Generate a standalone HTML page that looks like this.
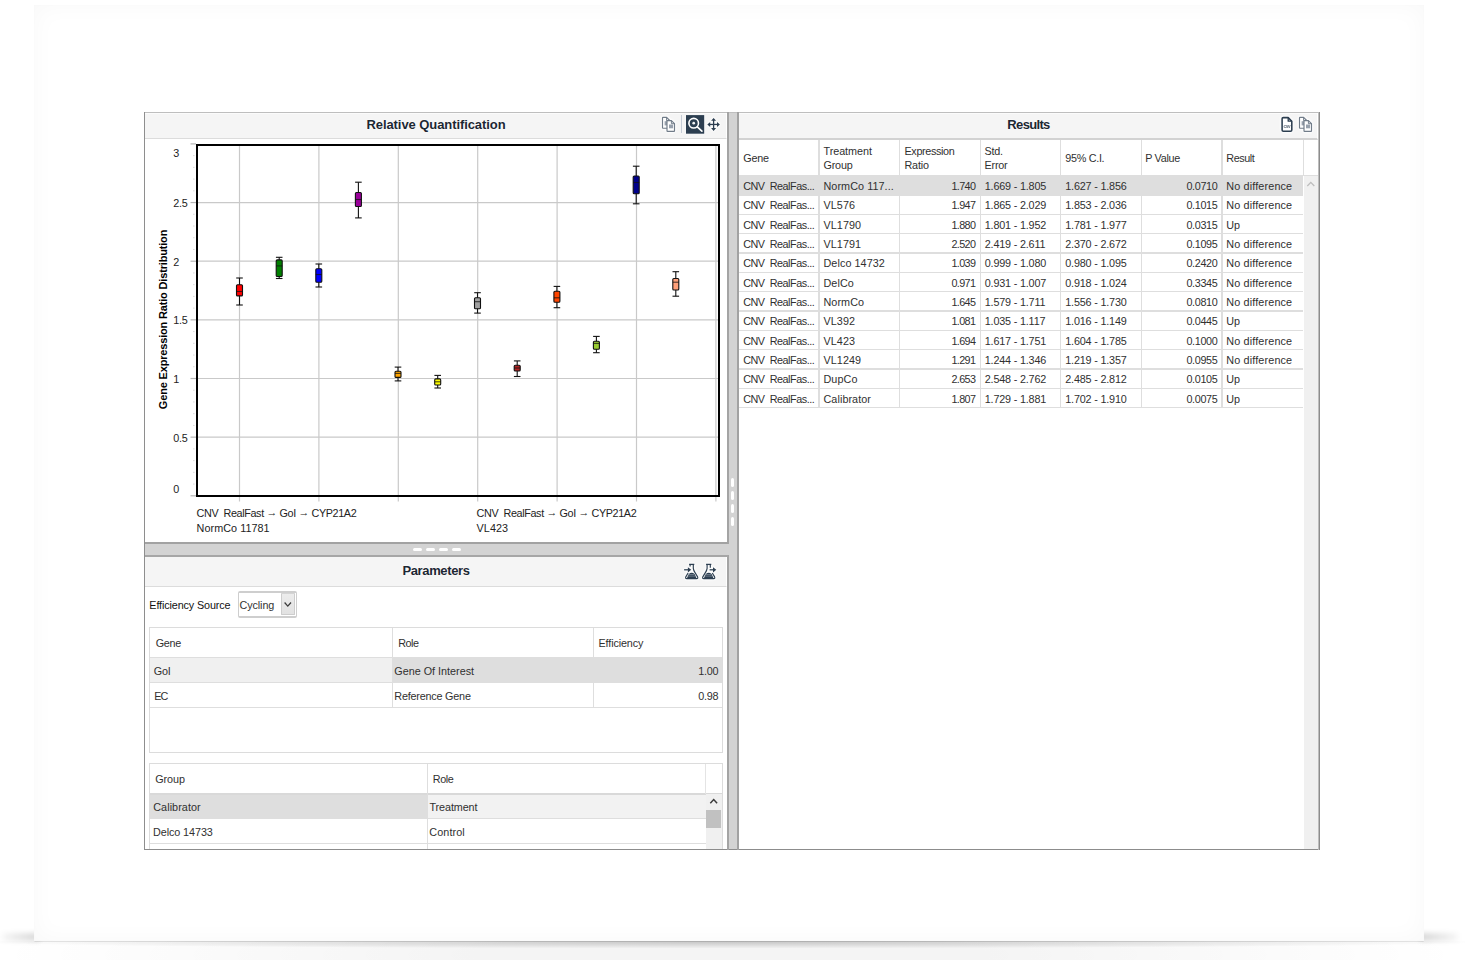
<!DOCTYPE html><html lang="en"><head><meta charset="utf-8"><title>Relative Quantification</title><style>
*{box-sizing:border-box;margin:0;padding:0}
html,body{width:1465px;height:960px;overflow:hidden;background:#fff}
body{position:relative;font-family:"Liberation Sans",sans-serif;font-size:10.8px;color:#303030}
.abs{position:absolute}
.t{position:absolute;white-space:pre;line-height:14px;height:14px}
.card{position:absolute;left:34.4px;top:5.2px;width:1390px;height:935.7px;background:#fff;
  box-shadow:inset 0 0 24px rgba(0,0,0,.03), inset 0 0 1px rgba(0,0,0,.06), 0 0 0 rgba(0,0,0,0);}
.shadowL,.shadowR{position:absolute;top:932.5px;height:8px;width:38px;filter:blur(2.6px);}
.shadowL{background:linear-gradient(to left,rgba(0,0,0,.16),rgba(0,0,0,.03))}
.shadowR{background:linear-gradient(to right,rgba(0,0,0,.16),rgba(0,0,0,.03))}
.shadowB{position:absolute;left:0;top:940.6px;width:1465px;height:20px;background:
 linear-gradient(to right,rgba(0,0,0,0) 34px,rgba(0,0,0,.09) 35px,rgba(0,0,0,.12) 300px,rgba(0,0,0,.14) 730px,rgba(0,0,0,.12) 1160px,rgba(0,0,0,.09) 1423px,rgba(0,0,0,0) 1424.5px) 0 0/100% 1.3px no-repeat,
 radial-gradient(ellipse 760px 6.5px at 730px 1px,rgba(0,0,0,.18),rgba(0,0,0,.10) 45%,rgba(0,0,0,.03) 85%,rgba(0,0,0,0) 100%),
 radial-gradient(ellipse 735px 75px at 730px 14px,rgba(0,0,0,.045) 0,rgba(0,0,0,.042) 35%,rgba(0,0,0,.02) 70%,rgba(0,0,0,0) 100%)}
.hdr{position:absolute;background:#f5f5f5;border-bottom:1px solid #dcdcdc}
.ttl{position:absolute;text-shadow:0 0 2px #fff,0 0 1px #fff;font-weight:bold;font-size:13px;color:#1c2733;text-align:center;line-height:16px;white-space:pre}
.ln{position:absolute;background:#dedede}
</style></head><body>
<div class="shadowL" style="left:2px"></div><div class="shadowR" style="left:1420px"></div><div class="shadowB"></div>
<div class="card"></div>
<div class="abs" style="left:144px;top:112px;width:1176px;height:738px;background:#d3d3d3;"></div>
<div class="abs" style="left:145px;top:113px;width:583px;height:430px;background:#fff;"></div>
<div class="abs" style="left:145px;top:557px;width:583px;height:292px;background:#fff;"></div>
<div class="abs" style="left:739px;top:113px;width:579px;height:736px;background:#fff;"></div>
<div class="hdr" style="left:145px;top:113px;width:582px;height:26px;box-shadow:inset 0 1px 0 #fbfbfb;border-right:1px solid #fff"></div>
<div class="ttl" style="left:145px;top:116.9px;width:582px;letter-spacing:-0.08px">Relative Quantification</div>
<div class="hdr" style="left:145px;top:557px;width:582px;height:30px;border-right:1px solid #fff"></div>
<div class="ttl" style="left:145px;top:562.7px;width:582px;letter-spacing:-0.36px">Parameters</div>
<div class="hdr" style="left:739px;top:113px;width:579px;height:27px;border-bottom:2px solid #d2d2d2;box-shadow:inset 0 1px 0 #fbfbfb;border-right:1px solid #fff"></div>
<div class="ttl" style="left:739px;top:116.6px;width:579px;letter-spacing:-0.66px">Results</div>
<div class="abs" style="left:144px;top:112px;width:1176px;height:1px;background:#bebebe;"></div>
<div class="abs" style="left:144px;top:112px;width:1px;height:738px;background:#8e8e8e;"></div>
<div class="abs" style="left:144px;top:849px;width:1176px;height:1px;background:#8c8c8c;"></div>
<div class="abs" style="left:1318px;top:112px;width:1px;height:738px;background:#bdbdbd;"></div>
<div class="abs" style="left:1319px;top:112px;width:1px;height:738px;background:#8c8c8c;"></div>
<div class="abs" style="left:727.4px;top:112px;width:1.6px;height:432.1px;background:#a4a4a4;"></div>
<div class="abs" style="left:727.4px;top:555.3px;width:1.6px;height:294.7px;background:#a4a4a4;"></div>
<div class="abs" style="left:736.9px;top:112px;width:2.1px;height:738px;background:#a2a2a2;"></div>
<div class="abs" style="left:145px;top:542.4px;width:583px;height:1.7px;background:#a2a2a2;"></div>
<div class="abs" style="left:145px;top:555.3px;width:583px;height:1.7px;background:#a6a6a6;"></div>
<div class="abs" style="left:412.9px;top:548px;width:9.5px;height:3.4px;background:#fff;border-radius:2px"></div>
<div class="abs" style="left:425.79999999999995px;top:548px;width:9.5px;height:3.4px;background:#fff;border-radius:2px"></div>
<div class="abs" style="left:438.7px;top:548px;width:9.5px;height:3.4px;background:#fff;border-radius:2px"></div>
<div class="abs" style="left:451.59999999999997px;top:548px;width:9.5px;height:3.4px;background:#fff;border-radius:2px"></div>
<div class="abs" style="left:731.2px;top:478.3px;width:3.2px;height:9px;background:#fff;border-radius:2px"></div>
<div class="abs" style="left:731.2px;top:491.3px;width:3.2px;height:9px;background:#fff;border-radius:2px"></div>
<div class="abs" style="left:731.2px;top:504.3px;width:3.2px;height:9px;background:#fff;border-radius:2px"></div>
<div class="abs" style="left:731.2px;top:517.3px;width:3.2px;height:9px;background:#fff;border-radius:2px"></div>
<svg class="abs" style="left:146px;top:139px" width="582" height="404" viewBox="146 139 582 404" font-family="Liberation Sans, sans-serif" font-size="10.8">
<line x1="198" x2="718" y1="437.15" y2="437.15" stroke="#c9c9c9" stroke-width="1.2"/>
<line x1="198" x2="718" y1="378.50" y2="378.50" stroke="#c9c9c9" stroke-width="1.2"/>
<line x1="198" x2="718" y1="319.85" y2="319.85" stroke="#c9c9c9" stroke-width="1.2"/>
<line x1="198" x2="718" y1="261.20" y2="261.20" stroke="#c9c9c9" stroke-width="1.2"/>
<line x1="198" x2="718" y1="202.55" y2="202.55" stroke="#c9c9c9" stroke-width="1.2"/>
<line x1="239.50" x2="239.50" y1="146" y2="501.5" stroke="#c9c9c9" stroke-width="1.2"/>
<line x1="318.90" x2="318.90" y1="146" y2="501.5" stroke="#c9c9c9" stroke-width="1.2"/>
<line x1="398.30" x2="398.30" y1="146" y2="501.5" stroke="#c9c9c9" stroke-width="1.2"/>
<line x1="477.70" x2="477.70" y1="146" y2="501.5" stroke="#c9c9c9" stroke-width="1.2"/>
<line x1="557.10" x2="557.10" y1="146" y2="501.5" stroke="#c9c9c9" stroke-width="1.2"/>
<line x1="636.50" x2="636.50" y1="146" y2="501.5" stroke="#c9c9c9" stroke-width="1.2"/>
<line x1="715.90" x2="715.90" y1="146" y2="501.5" stroke="#c9c9c9" stroke-width="1.2"/>
<line x1="190.5" x2="196" y1="495.80" y2="495.80" stroke="#b5b5b5" stroke-width="1.2"/>
<line x1="193" x2="194.6" y1="484.07" y2="484.07" stroke="#dcdcdc" stroke-width="1"/>
<line x1="193" x2="194.6" y1="472.34" y2="472.34" stroke="#dcdcdc" stroke-width="1"/>
<line x1="193" x2="194.6" y1="460.61" y2="460.61" stroke="#dcdcdc" stroke-width="1"/>
<line x1="193" x2="194.6" y1="448.88" y2="448.88" stroke="#dcdcdc" stroke-width="1"/>
<line x1="190.5" x2="196" y1="437.15" y2="437.15" stroke="#b5b5b5" stroke-width="1.2"/>
<line x1="193" x2="194.6" y1="425.42" y2="425.42" stroke="#dcdcdc" stroke-width="1"/>
<line x1="193" x2="194.6" y1="413.69" y2="413.69" stroke="#dcdcdc" stroke-width="1"/>
<line x1="193" x2="194.6" y1="401.96" y2="401.96" stroke="#dcdcdc" stroke-width="1"/>
<line x1="193" x2="194.6" y1="390.23" y2="390.23" stroke="#dcdcdc" stroke-width="1"/>
<line x1="190.5" x2="196" y1="378.50" y2="378.50" stroke="#b5b5b5" stroke-width="1.2"/>
<line x1="193" x2="194.6" y1="366.77" y2="366.77" stroke="#dcdcdc" stroke-width="1"/>
<line x1="193" x2="194.6" y1="355.04" y2="355.04" stroke="#dcdcdc" stroke-width="1"/>
<line x1="193" x2="194.6" y1="343.31" y2="343.31" stroke="#dcdcdc" stroke-width="1"/>
<line x1="193" x2="194.6" y1="331.58" y2="331.58" stroke="#dcdcdc" stroke-width="1"/>
<line x1="190.5" x2="196" y1="319.85" y2="319.85" stroke="#b5b5b5" stroke-width="1.2"/>
<line x1="193" x2="194.6" y1="308.12" y2="308.12" stroke="#dcdcdc" stroke-width="1"/>
<line x1="193" x2="194.6" y1="296.39" y2="296.39" stroke="#dcdcdc" stroke-width="1"/>
<line x1="193" x2="194.6" y1="284.66" y2="284.66" stroke="#dcdcdc" stroke-width="1"/>
<line x1="193" x2="194.6" y1="272.93" y2="272.93" stroke="#dcdcdc" stroke-width="1"/>
<line x1="190.5" x2="196" y1="261.20" y2="261.20" stroke="#b5b5b5" stroke-width="1.2"/>
<line x1="193" x2="194.6" y1="249.47" y2="249.47" stroke="#dcdcdc" stroke-width="1"/>
<line x1="193" x2="194.6" y1="237.74" y2="237.74" stroke="#dcdcdc" stroke-width="1"/>
<line x1="193" x2="194.6" y1="226.01" y2="226.01" stroke="#dcdcdc" stroke-width="1"/>
<line x1="193" x2="194.6" y1="214.28" y2="214.28" stroke="#dcdcdc" stroke-width="1"/>
<line x1="190.5" x2="196" y1="202.55" y2="202.55" stroke="#b5b5b5" stroke-width="1.2"/>
<line x1="193" x2="194.6" y1="190.82" y2="190.82" stroke="#dcdcdc" stroke-width="1"/>
<line x1="193" x2="194.6" y1="179.09" y2="179.09" stroke="#dcdcdc" stroke-width="1"/>
<line x1="193" x2="194.6" y1="167.36" y2="167.36" stroke="#dcdcdc" stroke-width="1"/>
<line x1="193" x2="194.6" y1="155.63" y2="155.63" stroke="#dcdcdc" stroke-width="1"/>
<line x1="190.5" x2="196" y1="143.90" y2="143.90" stroke="#b5b5b5" stroke-width="1.2"/>
<rect x="197" y="145" width="522" height="351" fill="none" stroke="#000" stroke-width="2"/>
<text x="173.2" y="157.3" fill="#222" letter-spacing="-0.2">3</text>
<text x="173.2" y="206.6" fill="#222" letter-spacing="-0.2">2.5</text>
<text x="173.2" y="265.5" fill="#222" letter-spacing="-0.2">2</text>
<text x="173.2" y="324.3" fill="#222" letter-spacing="-0.2">1.5</text>
<text x="173.2" y="382.8" fill="#222" letter-spacing="-0.2">1</text>
<text x="173.2" y="441.5" fill="#222" letter-spacing="-0.2">0.5</text>
<text x="173.2" y="493.2" fill="#222" letter-spacing="-0.2">0</text>
<text transform="translate(167,319.5) rotate(-90)" text-anchor="middle" font-weight="bold" font-size="11" fill="#000" letter-spacing="-0.17">Gene Expression Ratio Distribution</text>
<text x="196.6" y="517" fill="#222" letter-spacing="-0.37" xml:space="preserve">CNV  RealFast <tspan dy="-1.5" font-weight="bold">→</tspan><tspan dy="1.5"> GoI </tspan><tspan dy="-1.5" font-weight="bold">→</tspan><tspan dy="1.5"> CYP21A2</tspan></text>
<text x="196.6" y="531.7" fill="#222" letter-spacing="0.05">NormCo 11781</text>
<text x="476.6" y="517" fill="#222" letter-spacing="-0.37" xml:space="preserve">CNV  RealFast <tspan dy="-1.5" font-weight="bold">→</tspan><tspan dy="1.5"> GoI </tspan><tspan dy="-1.5" font-weight="bold">→</tspan><tspan dy="1.5"> CYP21A2</tspan></text>
<text x="476.6" y="531.7" fill="#222" letter-spacing="0.05">VL423</text>
<g stroke="#111" stroke-width="1.1"><line x1="239.5" x2="239.5" y1="278.0" y2="305.0"/><line x1="236.2" x2="242.8" y1="278.0" y2="278.0"/><line x1="236.2" x2="242.8" y1="305.0" y2="305.0"/><rect x="236.5" y="284.7" width="6" height="11.2" rx="1" fill="#ff0000"/><line x1="236.5" x2="242.5" y1="291.5" y2="291.5" stroke-opacity=".75"/></g>
<g stroke="#111" stroke-width="1.1"><line x1="279.2" x2="279.2" y1="257.3" y2="278.5"/><line x1="275.9" x2="282.5" y1="257.3" y2="257.3"/><line x1="275.9" x2="282.5" y1="278.5" y2="278.5"/><rect x="276.2" y="259.9" width="6" height="16.6" rx="1" fill="#008000"/><line x1="276.2" x2="282.2" y1="265.9" y2="265.9" stroke-opacity=".75"/></g>
<g stroke="#111" stroke-width="1.1"><line x1="318.8" x2="318.8" y1="264.0" y2="287.0"/><line x1="315.5" x2="322.1" y1="264.0" y2="264.0"/><line x1="315.5" x2="322.1" y1="287.0" y2="287.0"/><rect x="315.8" y="268.7" width="6" height="13.6" rx="1" fill="#0000ff"/><line x1="315.8" x2="321.8" y1="274.5" y2="274.5" stroke-opacity=".75"/></g>
<g stroke="#111" stroke-width="1.1"><line x1="358.4" x2="358.4" y1="182.2" y2="217.9"/><line x1="355.09999999999997" x2="361.7" y1="182.2" y2="182.2"/><line x1="355.09999999999997" x2="361.7" y1="217.9" y2="217.9"/><rect x="355.4" y="192.5" width="6" height="14.0" rx="1" fill="#990099"/><line x1="355.4" x2="361.4" y1="199.5" y2="199.5" stroke-opacity=".75"/></g>
<g stroke="#111" stroke-width="1.1"><line x1="398.0" x2="398.0" y1="367.1" y2="380.9"/><line x1="394.7" x2="401.3" y1="367.1" y2="367.1"/><line x1="394.7" x2="401.3" y1="380.9" y2="380.9"/><rect x="395.0" y="371.2" width="6" height="6.2" rx="1" fill="#ffa500"/><line x1="395.0" x2="401.0" y1="373.4" y2="373.4" stroke-opacity=".75"/></g>
<g stroke="#111" stroke-width="1.1"><line x1="437.7" x2="437.7" y1="375.4" y2="388.0"/><line x1="434.4" x2="441.0" y1="375.4" y2="375.4"/><line x1="434.4" x2="441.0" y1="388.0" y2="388.0"/><rect x="434.7" y="378.9" width="6" height="6.1" rx="1" fill="#ffff00"/><line x1="434.7" x2="440.7" y1="381.8" y2="381.8" stroke-opacity=".75"/></g>
<g stroke="#111" stroke-width="1.1"><line x1="477.5" x2="477.5" y1="292.7" y2="313.1"/><line x1="474.2" x2="480.8" y1="292.7" y2="292.7"/><line x1="474.2" x2="480.8" y1="313.1" y2="313.1"/><rect x="474.5" y="297.8" width="6" height="11.0" rx="1" fill="#a0a0a0"/><line x1="474.5" x2="480.5" y1="301.7" y2="301.7" stroke-opacity=".75"/></g>
<g stroke="#111" stroke-width="1.1"><line x1="517.2" x2="517.2" y1="360.9" y2="376.5"/><line x1="513.9000000000001" x2="520.5" y1="360.9" y2="360.9"/><line x1="513.9000000000001" x2="520.5" y1="376.5" y2="376.5"/><rect x="514.2" y="365.2" width="6" height="5.8" rx="1" fill="#b22222"/><line x1="514.2" x2="520.2" y1="368.0" y2="368.0" stroke-opacity=".75"/></g>
<g stroke="#111" stroke-width="1.1"><line x1="556.9" x2="556.9" y1="286.4" y2="307.7"/><line x1="553.6" x2="560.1999999999999" y1="286.4" y2="286.4"/><line x1="553.6" x2="560.1999999999999" y1="307.7" y2="307.7"/><rect x="553.9" y="291.2" width="6" height="11.1" rx="1" fill="#ff4500"/><line x1="553.9" x2="559.9" y1="297.8" y2="297.8" stroke-opacity=".75"/></g>
<g stroke="#111" stroke-width="1.1"><line x1="596.4" x2="596.4" y1="336.4" y2="352.7"/><line x1="593.1" x2="599.6999999999999" y1="336.4" y2="336.4"/><line x1="593.1" x2="599.6999999999999" y1="352.7" y2="352.7"/><rect x="593.4" y="341.3" width="6" height="7.9" rx="1" fill="#9acd32"/><line x1="593.4" x2="599.4" y1="343.4" y2="343.4" stroke-opacity=".75"/></g>
<g stroke="#111" stroke-width="1.1"><line x1="636.2" x2="636.2" y1="166.2" y2="203.8"/><line x1="632.9000000000001" x2="639.5" y1="166.2" y2="166.2"/><line x1="632.9000000000001" x2="639.5" y1="203.8" y2="203.8"/><rect x="633.2" y="176.0" width="6" height="17.7" rx="1" fill="#00008b"/><line x1="633.2" x2="639.2" y1="182.5" y2="182.5" stroke-opacity=".75"/></g>
<g stroke="#111" stroke-width="1.1"><line x1="675.8" x2="675.8" y1="271.7" y2="296.2"/><line x1="672.5" x2="679.0999999999999" y1="271.7" y2="271.7"/><line x1="672.5" x2="679.0999999999999" y1="296.2" y2="296.2"/><rect x="672.8" y="278.5" width="6" height="11.5" rx="1" fill="#ffa07a"/><line x1="672.8" x2="678.8" y1="282.2" y2="282.2" stroke-opacity=".75"/></g>
</svg>
<div class="t" style="left:149.3px;top:598.2px;letter-spacing:-0.12px;color:#111">Efficiency Source</div>
<div class="abs" style="left:237.6px;top:590.9px;width:59.2px;height:26.7px;background:#fff;border:1.5px solid #cecece;border-top-width:2.1px;border-bottom-width:2.1px;border-radius:2px"></div>
<div class="abs" style="left:281px;top:593px;width:14px;height:22.2px;background:linear-gradient(#ececec,#e2e2e2);border:1px solid #cdcdcd;border-top-color:#d4d4d4;border-radius:1px"></div>
<svg class="abs" style="left:283px;top:600px" width="10" height="9" viewBox="283 600 10 9"><path d="M284.6 602.5 L287.8 606.1 L291 602.5" fill="none" stroke="#3a3a3a" stroke-width="1.25"/></svg>
<div class="t" style="left:239.5px;top:598.2px;letter-spacing:-0.1px;color:#333">Cycling</div>
<div class="abs" style="left:149px;top:627px;width:574px;height:126px;background:#fff;border:1px solid #dcdcdc"></div>
<div class="abs" style="left:150px;top:658px;width:242px;height:24px;background:#f0f0f0;"></div>
<div class="abs" style="left:392px;top:658px;width:330px;height:24px;background:#dedede;"></div>
<div class="ln" style="left:150px;top:657px;width:572px;height:1px"></div>
<div class="ln" style="left:150px;top:682px;width:572px;height:1px"></div>
<div class="ln" style="left:150px;top:707px;width:572px;height:1px"></div>
<div class="ln" style="left:392px;top:628px;width:1px;height:80px"></div>
<div class="ln" style="left:592.5px;top:628px;width:1px;height:80px"></div>
<div class="t" style="left:155.8px;top:635.8px;letter-spacing:-0.35px">Gene</div>
<div class="t" style="left:398.2px;top:635.8px;letter-spacing:-0.5px">Role</div>
<div class="t" style="left:598.5px;top:635.8px;letter-spacing:-0.12px">Efficiency</div>
<div class="t" style="left:153.8px;top:663.7px;letter-spacing:-0.2px">GoI</div>
<div class="t" style="left:394.3px;top:663.7px;letter-spacing:0px">Gene Of Interest</div>
<div class="t" style="right:746.9px;text-align:right;top:663.7px;letter-spacing:-0.3px">1.00</div>
<div class="t" style="left:154.2px;top:688.7px;letter-spacing:-0.9px">EC</div>
<div class="t" style="left:394.3px;top:688.7px;letter-spacing:-0.2px">Reference Gene</div>
<div class="t" style="right:746.9px;text-align:right;top:688.7px;letter-spacing:-0.3px">0.98</div>
<div class="abs" style="left:149px;top:763px;width:573.5px;height:86px;background:#fff;border:1px solid #dcdcdc;border-bottom:none"></div>
<div class="abs" style="left:150px;top:794px;width:277px;height:24.5px;background:#dedede;"></div>
<div class="abs" style="left:427px;top:794px;width:279px;height:24.5px;background:#f2f2f2;"></div>
<div class="ln" style="left:150px;top:793px;width:556px;height:1px"></div>
<div class="ln" style="left:150px;top:818px;width:556px;height:1px"></div>
<div class="ln" style="left:150px;top:843px;width:556px;height:1px"></div>
<div class="ln" style="left:150px;top:793px;width:572px;height:1.8px;background:#d9d9d9"></div>
<div class="ln" style="left:426.5px;top:764px;width:1px;height:85px"></div>
<div class="ln" style="left:705px;top:764px;width:1px;height:30px;background:#e4e4e4"></div>
<div class="abs" style="left:706px;top:794px;width:15.5px;height:55px;background:#f0f0f0;"></div>
<div class="abs" style="left:706.3px;top:810.3px;width:15px;height:17.6px;background:#c1c1c1;"></div>
<svg class="abs" style="left:709px;top:797px" width="10" height="8" viewBox="0 0 10 8"><path d="M1.3 6.2 L4.7 2.6 L8.1 6.2" fill="none" stroke="#3c3c3c" stroke-width="1.5"/></svg>
<div class="t" style="left:155.3px;top:772.2px;letter-spacing:-0.1px">Group</div>
<div class="t" style="left:432.8px;top:772.0px;letter-spacing:-0.45px">Role</div>
<div class="t" style="left:153.2px;top:799.7px;letter-spacing:0.08px">Calibrator</div>
<div class="t" style="left:429.5px;top:799.7px;letter-spacing:-0.1px">Treatment</div>
<div class="t" style="left:153.0px;top:824.5px;letter-spacing:-0.08px">Delco 14733</div>
<div class="t" style="left:429.3px;top:824.5px;letter-spacing:0.1px">Control</div>
<div class="abs" style="left:739px;top:176px;width:564px;height:19.3px;background:#dedede;"></div>
<div class="abs" style="left:1303.5px;top:176px;width:14.5px;height:673px;background:#f0f0f0;"></div>
<svg class="abs" style="left:1306px;top:180px" width="10" height="8" viewBox="0 0 10 8"><path d="M1.3 6 L4.8 2.4 L8.3 6" fill="none" stroke="#bdbdbd" stroke-width="1.3"/></svg>
<div class="ln" style="left:739px;top:175.20px;width:564px;height:1.2px"></div>
<div class="ln" style="left:739px;top:194.52px;width:564px;height:1.2px"></div>
<div class="ln" style="left:739px;top:213.84px;width:564px;height:1.2px"></div>
<div class="ln" style="left:739px;top:233.16px;width:564px;height:1.2px"></div>
<div class="ln" style="left:739px;top:252.48px;width:564px;height:1.2px"></div>
<div class="ln" style="left:739px;top:271.80px;width:564px;height:1.2px"></div>
<div class="ln" style="left:739px;top:291.12px;width:564px;height:1.2px"></div>
<div class="ln" style="left:739px;top:310.44px;width:564px;height:1.2px"></div>
<div class="ln" style="left:739px;top:329.76px;width:564px;height:1.2px"></div>
<div class="ln" style="left:739px;top:349.08px;width:564px;height:1.2px"></div>
<div class="ln" style="left:739px;top:368.40px;width:564px;height:1.2px"></div>
<div class="ln" style="left:739px;top:387.72px;width:564px;height:1.2px"></div>
<div class="ln" style="left:739px;top:407.04px;width:564px;height:1.2px"></div>
<div class="ln" style="left:1303px;top:175.2px;width:15px;height:1.2px"></div>
<div class="ln" style="left:818.4px;top:140px;width:1.2px;height:267.5px"></div>
<div class="ln" style="left:899.3px;top:140px;width:1.2px;height:267.5px"></div>
<div class="ln" style="left:979.7px;top:140px;width:1.2px;height:267.5px"></div>
<div class="ln" style="left:1060.2px;top:140px;width:1.2px;height:267.5px"></div>
<div class="ln" style="left:1140.6px;top:140px;width:1.2px;height:267.5px"></div>
<div class="ln" style="left:1221.4px;top:140px;width:1.2px;height:267.5px"></div>
<div class="ln" style="left:1302.5px;top:140px;width:1.2px;height:36px"></div>
<div class="t" style="left:743.2px;top:151.1px;letter-spacing:-0.2px">Gene</div>
<div class="t" style="left:823.5px;top:143.6px;letter-spacing:-0.05px">Treatment</div>
<div class="t" style="left:823.5px;top:158.3px;letter-spacing:-0.2px">Group</div>
<div class="t" style="left:904.5px;top:143.6px;letter-spacing:-0.35px">Expression</div>
<div class="t" style="left:904.5px;top:158.3px;letter-spacing:-0.2px">Ratio</div>
<div class="t" style="left:984.5px;top:143.6px;letter-spacing:-0.2px">Std.</div>
<div class="t" style="left:984.5px;top:158.3px;letter-spacing:-0.2px">Error</div>
<div class="t" style="left:1065.3px;top:151.1px;letter-spacing:-0.3px">95% C.I.</div>
<div class="t" style="left:1145.2px;top:151.1px;letter-spacing:-0.3px">P Value</div>
<div class="t" style="left:1226.3px;top:151.1px;letter-spacing:-0.45px">Result</div>
<div class="t" style="left:743.2px;top:179.1px;letter-spacing:-0.46px">CNV  RealFas...</div>
<div class="t" style="left:823.5px;top:179.1px;letter-spacing:0.07px">NormCo 117...</div>
<div class="t" style="right:489.6px;text-align:right;top:179.1px;letter-spacing:-0.6px">1.740</div>
<div class="t" style="left:984.8px;top:179.1px;letter-spacing:-0.18px">1.669 - 1.805</div>
<div class="t" style="left:1065.3px;top:179.1px;letter-spacing:-0.18px">1.627 - 1.856</div>
<div class="t" style="right:247.5999999999999px;text-align:right;top:179.1px;letter-spacing:-0.35px">0.0710</div>
<div class="t" style="left:1226.3px;top:179.1px;letter-spacing:0.15px">No difference</div>
<div class="t" style="left:743.2px;top:198.4px;letter-spacing:-0.46px">CNV  RealFas...</div>
<div class="t" style="left:823.5px;top:198.4px;letter-spacing:0.07px">VL576</div>
<div class="t" style="right:489.6px;text-align:right;top:198.4px;letter-spacing:-0.6px">1.947</div>
<div class="t" style="left:984.8px;top:198.4px;letter-spacing:-0.18px">1.865 - 2.029</div>
<div class="t" style="left:1065.3px;top:198.4px;letter-spacing:-0.18px">1.853 - 2.036</div>
<div class="t" style="right:247.5999999999999px;text-align:right;top:198.4px;letter-spacing:-0.35px">0.1015</div>
<div class="t" style="left:1226.3px;top:198.4px;letter-spacing:0.15px">No difference</div>
<div class="t" style="left:743.2px;top:217.7px;letter-spacing:-0.46px">CNV  RealFas...</div>
<div class="t" style="left:823.5px;top:217.7px;letter-spacing:0.07px">VL1790</div>
<div class="t" style="right:489.6px;text-align:right;top:217.7px;letter-spacing:-0.6px">1.880</div>
<div class="t" style="left:984.8px;top:217.7px;letter-spacing:-0.18px">1.801 - 1.952</div>
<div class="t" style="left:1065.3px;top:217.7px;letter-spacing:-0.18px">1.781 - 1.977</div>
<div class="t" style="right:247.5999999999999px;text-align:right;top:217.7px;letter-spacing:-0.35px">0.0315</div>
<div class="t" style="left:1226.3px;top:217.7px;letter-spacing:-0.2px">Up</div>
<div class="t" style="left:743.2px;top:237.1px;letter-spacing:-0.46px">CNV  RealFas...</div>
<div class="t" style="left:823.5px;top:237.1px;letter-spacing:0.07px">VL1791</div>
<div class="t" style="right:489.6px;text-align:right;top:237.1px;letter-spacing:-0.6px">2.520</div>
<div class="t" style="left:984.8px;top:237.1px;letter-spacing:-0.18px">2.419 - 2.611</div>
<div class="t" style="left:1065.3px;top:237.1px;letter-spacing:-0.18px">2.370 - 2.672</div>
<div class="t" style="right:247.5999999999999px;text-align:right;top:237.1px;letter-spacing:-0.35px">0.1095</div>
<div class="t" style="left:1226.3px;top:237.1px;letter-spacing:0.15px">No difference</div>
<div class="t" style="left:743.2px;top:256.4px;letter-spacing:-0.46px">CNV  RealFas...</div>
<div class="t" style="left:823.5px;top:256.4px;letter-spacing:0.07px">Delco 14732</div>
<div class="t" style="right:489.6px;text-align:right;top:256.4px;letter-spacing:-0.6px">1.039</div>
<div class="t" style="left:984.8px;top:256.4px;letter-spacing:-0.18px">0.999 - 1.080</div>
<div class="t" style="left:1065.3px;top:256.4px;letter-spacing:-0.18px">0.980 - 1.095</div>
<div class="t" style="right:247.5999999999999px;text-align:right;top:256.4px;letter-spacing:-0.35px">0.2420</div>
<div class="t" style="left:1226.3px;top:256.4px;letter-spacing:0.15px">No difference</div>
<div class="t" style="left:743.2px;top:275.7px;letter-spacing:-0.46px">CNV  RealFas...</div>
<div class="t" style="left:823.5px;top:275.7px;letter-spacing:0.07px">DelCo</div>
<div class="t" style="right:489.6px;text-align:right;top:275.7px;letter-spacing:-0.6px">0.971</div>
<div class="t" style="left:984.8px;top:275.7px;letter-spacing:-0.18px">0.931 - 1.007</div>
<div class="t" style="left:1065.3px;top:275.7px;letter-spacing:-0.18px">0.918 - 1.024</div>
<div class="t" style="right:247.5999999999999px;text-align:right;top:275.7px;letter-spacing:-0.35px">0.3345</div>
<div class="t" style="left:1226.3px;top:275.7px;letter-spacing:0.15px">No difference</div>
<div class="t" style="left:743.2px;top:295.0px;letter-spacing:-0.46px">CNV  RealFas...</div>
<div class="t" style="left:823.5px;top:295.0px;letter-spacing:0.07px">NormCo</div>
<div class="t" style="right:489.6px;text-align:right;top:295.0px;letter-spacing:-0.6px">1.645</div>
<div class="t" style="left:984.8px;top:295.0px;letter-spacing:-0.18px">1.579 - 1.711</div>
<div class="t" style="left:1065.3px;top:295.0px;letter-spacing:-0.18px">1.556 - 1.730</div>
<div class="t" style="right:247.5999999999999px;text-align:right;top:295.0px;letter-spacing:-0.35px">0.0810</div>
<div class="t" style="left:1226.3px;top:295.0px;letter-spacing:0.15px">No difference</div>
<div class="t" style="left:743.2px;top:314.3px;letter-spacing:-0.46px">CNV  RealFas...</div>
<div class="t" style="left:823.5px;top:314.3px;letter-spacing:0.07px">VL392</div>
<div class="t" style="right:489.6px;text-align:right;top:314.3px;letter-spacing:-0.6px">1.081</div>
<div class="t" style="left:984.8px;top:314.3px;letter-spacing:-0.18px">1.035 - 1.117</div>
<div class="t" style="left:1065.3px;top:314.3px;letter-spacing:-0.18px">1.016 - 1.149</div>
<div class="t" style="right:247.5999999999999px;text-align:right;top:314.3px;letter-spacing:-0.35px">0.0445</div>
<div class="t" style="left:1226.3px;top:314.3px;letter-spacing:-0.2px">Up</div>
<div class="t" style="left:743.2px;top:333.7px;letter-spacing:-0.46px">CNV  RealFas...</div>
<div class="t" style="left:823.5px;top:333.7px;letter-spacing:0.07px">VL423</div>
<div class="t" style="right:489.6px;text-align:right;top:333.7px;letter-spacing:-0.6px">1.694</div>
<div class="t" style="left:984.8px;top:333.7px;letter-spacing:-0.18px">1.617 - 1.751</div>
<div class="t" style="left:1065.3px;top:333.7px;letter-spacing:-0.18px">1.604 - 1.785</div>
<div class="t" style="right:247.5999999999999px;text-align:right;top:333.7px;letter-spacing:-0.35px">0.1000</div>
<div class="t" style="left:1226.3px;top:333.7px;letter-spacing:0.15px">No difference</div>
<div class="t" style="left:743.2px;top:353.0px;letter-spacing:-0.46px">CNV  RealFas...</div>
<div class="t" style="left:823.5px;top:353.0px;letter-spacing:0.07px">VL1249</div>
<div class="t" style="right:489.6px;text-align:right;top:353.0px;letter-spacing:-0.6px">1.291</div>
<div class="t" style="left:984.8px;top:353.0px;letter-spacing:-0.18px">1.244 - 1.346</div>
<div class="t" style="left:1065.3px;top:353.0px;letter-spacing:-0.18px">1.219 - 1.357</div>
<div class="t" style="right:247.5999999999999px;text-align:right;top:353.0px;letter-spacing:-0.35px">0.0955</div>
<div class="t" style="left:1226.3px;top:353.0px;letter-spacing:0.15px">No difference</div>
<div class="t" style="left:743.2px;top:372.3px;letter-spacing:-0.46px">CNV  RealFas...</div>
<div class="t" style="left:823.5px;top:372.3px;letter-spacing:0.07px">DupCo</div>
<div class="t" style="right:489.6px;text-align:right;top:372.3px;letter-spacing:-0.6px">2.653</div>
<div class="t" style="left:984.8px;top:372.3px;letter-spacing:-0.18px">2.548 - 2.762</div>
<div class="t" style="left:1065.3px;top:372.3px;letter-spacing:-0.18px">2.485 - 2.812</div>
<div class="t" style="right:247.5999999999999px;text-align:right;top:372.3px;letter-spacing:-0.35px">0.0105</div>
<div class="t" style="left:1226.3px;top:372.3px;letter-spacing:-0.2px">Up</div>
<div class="t" style="left:743.2px;top:391.6px;letter-spacing:-0.46px">CNV  RealFas...</div>
<div class="t" style="left:823.5px;top:391.6px;letter-spacing:0.07px">Calibrator</div>
<div class="t" style="right:489.6px;text-align:right;top:391.6px;letter-spacing:-0.6px">1.807</div>
<div class="t" style="left:984.8px;top:391.6px;letter-spacing:-0.18px">1.729 - 1.881</div>
<div class="t" style="left:1065.3px;top:391.6px;letter-spacing:-0.18px">1.702 - 1.910</div>
<div class="t" style="right:247.5999999999999px;text-align:right;top:391.6px;letter-spacing:-0.35px">0.0075</div>
<div class="t" style="left:1226.3px;top:391.6px;letter-spacing:-0.2px">Up</div>
<svg class="abs" style="left:659.0px;top:113px;filter:drop-shadow(0 0 1px #fff) drop-shadow(0 0 1px #fff)" width="20" height="23" viewBox="659.0 113 20 23"><path d="M663.00 117.40 H666.60 L669.70 120.50 V127.70 Q669.70 128.20 669.20 128.20 H663.00 Q662.50 128.20 662.50 127.70 V117.90 Q662.50 117.40 663.00 117.40 Z" fill="#fff" stroke="#717c89" stroke-width="1.15" stroke-linejoin="round"/><path d="M666.60 117.40 V120.50 H669.70" fill="none" stroke="#717c89" stroke-width="0.98" stroke-linejoin="round"/><rect x="664.6" y="121.2" width="3.4" height="4.2" fill="#98a1ad"/><path d="M667.50 120.60 H671.40 L674.50 123.70 V130.90 Q674.50 131.40 674.00 131.40 H667.50 Q667.00 131.40 667.00 130.90 V121.10 Q667.00 120.60 667.50 120.60 Z" fill="#fff" stroke="#717c89" stroke-width="1.15" stroke-linejoin="round"/><path d="M671.40 120.60 V123.70 H674.50" fill="none" stroke="#717c89" stroke-width="0.98" stroke-linejoin="round"/><rect x="669.0" y="124.5" width="4.1" height="3.8" fill="#98a1ad"/></svg>
<div class="abs" style="left:681.2px;top:115.3px;width:1.3px;height:18.2px;background:#c6ccd6"></div>
<svg class="abs" style="left:685px;top:114px" width="21" height="21" viewBox="685 114 21 21"><rect x="685.6" y="114.8" width="19" height="19.2" fill="#fff" opacity=".9"/><rect x="686" y="115.1" width="18.2" height="18.6" fill="#2c3e50"/><circle cx="693.7" cy="123.2" r="4.8" fill="none" stroke="#fff" stroke-width="1.6"/><line x1="697.3" y1="126.9" x2="701.9" y2="131.2" stroke="#fff" stroke-width="1.7" stroke-linecap="round"/><circle cx="693.7" cy="123.2" r="1.35" fill="#fff" opacity=".95"/></svg>
<svg class="abs" style="left:705px;top:115px;filter:drop-shadow(0 0 1px #fff) drop-shadow(0 0 1px #fff)" width="18" height="19" viewBox="705 115 18 19"><g fill="#2c3e50" stroke="none"><rect x="709.1" y="123.8" width="9" height="1.3"/><rect x="712.95" y="119.95" width="1.3" height="9"/><path d="M713.6 117.95 l2.5 2.9 h-5z M713.6 130.95 l2.5 -2.9 h-5z M707.3000000000001 124.45 l2.9 -2.5 v5z M719.9 124.45 l-2.9 -2.5 v5z"/></g></svg>
<svg class="abs" style="left:1278px;top:113px;filter:drop-shadow(0 0 1px #fff) drop-shadow(0 0 1px #fff)" width="18" height="23" viewBox="1278 113 18 23" font-family="Liberation Sans, sans-serif"><path d="M1283.30 117.60 H1288.20 L1291.80 121.20 V130.00 Q1291.80 131.20 1290.60 131.20 H1283.30 Q1282.10 131.20 1282.10 130.00 V118.80 Q1282.10 117.60 1283.30 117.60 Z" fill="#fff" stroke="#2c3e50" stroke-width="1.55" stroke-linejoin="round"/><path d="M1288.20 117.60 V121.20 H1291.80" fill="none" stroke="#2c3e50" stroke-width="1.32" stroke-linejoin="round"/><text x="1283.4" y="127.9" font-size="4.6" font-weight="bold" fill="#5b6877" letter-spacing="-0.2">csv</text></svg>
<svg class="abs" style="left:1295.7px;top:113px;filter:drop-shadow(0 0 1px #fff) drop-shadow(0 0 1px #fff)" width="20" height="23" viewBox="1295.7 113 20 23"><path d="M1299.70 117.40 H1303.30 L1306.40 120.50 V127.70 Q1306.40 128.20 1305.90 128.20 H1299.70 Q1299.20 128.20 1299.20 127.70 V117.90 Q1299.20 117.40 1299.70 117.40 Z" fill="#fff" stroke="#717c89" stroke-width="1.15" stroke-linejoin="round"/><path d="M1303.30 117.40 V120.50 H1306.40" fill="none" stroke="#717c89" stroke-width="0.98" stroke-linejoin="round"/><rect x="1301.3" y="121.2" width="3.4" height="4.2" fill="#98a1ad"/><path d="M1304.20 120.60 H1308.10 L1311.20 123.70 V130.90 Q1311.20 131.40 1310.70 131.40 H1304.20 Q1303.70 131.40 1303.70 130.90 V121.10 Q1303.70 120.60 1304.20 120.60 Z" fill="#fff" stroke="#717c89" stroke-width="1.15" stroke-linejoin="round"/><path d="M1308.10 120.60 V123.70 H1311.20" fill="none" stroke="#717c89" stroke-width="0.98" stroke-linejoin="round"/><rect x="1305.7" y="124.5" width="4.1" height="3.8" fill="#98a1ad"/></svg>
<svg class="abs" style="left:681.8px;top:560px;filter:drop-shadow(0 0 1px #fff) drop-shadow(0 0 1px #fff)" width="20" height="22" viewBox="681.8 560 20 22"><path d="M688.9 564.4 H694.1" stroke="#2c3e50" stroke-width="1.3" fill="none"/><path d="M693.1 564.6 V568.4 Q693.3 570.2 694.7 572.4 L697.4 576.9 Q698.1 578.6 696.4 578.6 H686.6 Q684.9 578.6 685.6 576.9 L687.9 573.0" fill="none" stroke="#2c3e50" stroke-width="1.15" stroke-linejoin="round"/><path d="M689.9 564.6 V566.6" stroke="#2c3e50" stroke-width="1.15" fill="none"/><path d="M683.9 569.8 H688.1" stroke="#2c3e50" stroke-width="1.25" fill="none"/><path d="M691.0 569.8 l-3.3 -2.6 v5.2z" fill="#2c3e50"/><path d="M686.8 577.9 L688.6 574.0 Q691.5 571.7 694.4 574.0 L696.2 577.9 Z" fill="#2c3e50"/><path d="M688.9 574.5 H694.1 M688.1 576.1 H694.9" stroke="#a9b2bd" stroke-width=".5" fill="none"/></svg>
<svg class="abs" style="left:699.1px;top:560px;filter:drop-shadow(0 0 1px #fff) drop-shadow(0 0 1px #fff)" width="20" height="22" viewBox="699.1 560 20 22"><path d="M706.2 564.4 H711.4000000000001" stroke="#2c3e50" stroke-width="1.3" fill="none"/><path d="M707.2 564.6 V568.4 Q707.0000000000001 570.2 705.6 572.4 L702.9000000000001 576.9 Q702.2 578.6 703.9000000000001 578.6 H713.7 Q715.4000000000001 578.6 714.7 576.9 L712.4000000000001 573.0" fill="none" stroke="#2c3e50" stroke-width="1.15" stroke-linejoin="round"/><path d="M710.4000000000001 564.6 V567.8" stroke="#2c3e50" stroke-width="1.15" fill="none"/><path d="M709.7 569.8 H713.8000000000001" stroke="#2c3e50" stroke-width="1.25" fill="none"/><path d="M716.4000000000001 569.8 l-3.3 -2.6 v5.2z" fill="#2c3e50"/><path d="M704.1 577.9 L705.9000000000001 574.0 Q708.8000000000001 571.7 711.7 574.0 L713.5000000000001 577.9 Z" fill="#2c3e50"/><path d="M706.2 574.5 H711.4000000000001 M705.4000000000001 576.1 H712.2" stroke="#a9b2bd" stroke-width=".5" fill="none"/></svg>
</body></html>
